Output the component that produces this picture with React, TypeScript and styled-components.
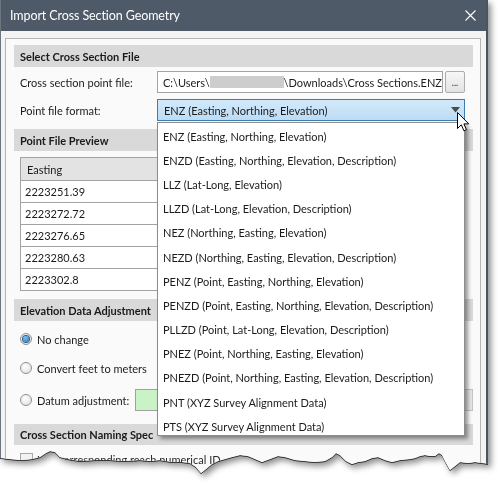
import React from "react";
import styled, { createGlobalStyle } from "styled-components";

const GlobalStyle = createGlobalStyle`
  html, body { margin: 0; padding: 0; background: #ffffff; }
  body { font-family: Lato, "Noto Sans", sans-serif; font-size: 11px; color: #1b1b1b; }
  * { box-sizing: border-box; }
`;

const JAG: [number, number][] = [
  [488, 464], [482, 463], [475, 462], [468, 463], [460, 462], [455, 466], [450, 470], [446, 463],
  [442, 455], [439, 453], [435, 456], [430, 456], [425, 455], [420, 456], [415, 458], [410, 459],
  [400, 460], [392, 462], [385, 460], [378, 457], [372, 458], [365, 461], [358, 462], [352, 464],
  [346, 461], [340, 455], [336, 453], [332, 457], [325, 461], [315, 462], [305, 461], [295, 460],
  [285, 457], [278, 456], [270, 459], [262, 462], [255, 459], [248, 456], [240, 455], [232, 457],
  [225, 459], [218, 461], [212, 464], [206, 469], [201, 473], [196, 467], [190, 463], [182, 462],
  [172, 462], [160, 460], [150, 461], [140, 460], [125, 461], [110, 460], [95, 460], [80, 461],
  [68, 459], [60, 457], [55, 452], [50, 451], [46, 453], [40, 457], [32, 459], [20, 460],
  [10, 459], [0, 458],
];
const CLIP = `polygon(0px 0px, 488px 0px, ${JAG.map(([x, y]) => `${x}px ${y}px`).join(", ")})`;

const Stage = styled.div`
  width: 500px;
  height: 484px;
  position: relative;
  overflow: hidden;
  background: #ffffff;
`;

const ShadowWrap = styled.div`
  width: 488px;
  filter: drop-shadow(0 1px 0 #3a3a3a) drop-shadow(3px 3px 3px rgba(0, 0, 0, 0.45));
`;

const Win = styled.div`
  width: 488px;
  height: 484px;
  background: #f3f3f3;
  border-left: 1px solid #6d7680;
  border-right: 2px solid #4a5562;
  clip-path: ${CLIP};
  display: flex;
  flex-direction: column;
`;

const TitleBar = styled.div`
  height: 31px;
  flex: none;
  background: #4f5a68;
  color: #ffffff;
  display: flex;
  align-items: center;
  justify-content: space-between;
  padding: 0 10px 0 9px;
  font-size: 12.5px;
  letter-spacing: -0.1px;
`;

const Body = styled.div`
  flex: 1;
  padding: 7px 5px 0 4px;
  display: flex;
`;

const Panel = styled.div`
  flex: 1;
  border: 1px solid #b5b5b5;
  border-bottom: none;
  background: #fafafa;
  padding: 6px 7px 0 8px;
  display: flex;
  flex-direction: column;
`;

const SectionHeader = styled.div<{ $mt: number; $h?: number }>`
  margin-top: ${(p) => p.$mt}px;
  height: ${(p) => p.$h ?? 22}px;
  flex: none;
  background: #d9d9d9;
  display: flex;
  align-items: center;
  padding-left: 6px;
  font-size: 11px;
  font-weight: 700;
  color: #1a1a1a;
  white-space: nowrap;
  overflow: hidden;
`;

const FieldRow = styled.div<{ $mt: number }>`
  margin-top: ${(p) => p.$mt}px;
  display: flex;
  align-items: center;
  padding-left: 6px;
  flex: none;
`;

const Label = styled.span`
  width: 137px;
  flex: none;
  white-space: nowrap;
`;

const TextBox = styled.div`
  width: 286px;
  height: 22px;
  border: 1px solid #a4a4a4;
  background: #ffffff;
  padding-left: 5px;
  display: flex;
  align-items: center;
  white-space: nowrap;
  overflow: hidden;
`;

const Redacted = styled.span`
  display: inline-block;
  width: 77px;
  height: 12px;
  background: #cdcdcd;
  filter: blur(0.6px);
`;

const BrowseButton = styled.div`
  margin-left: 2px;
  width: 20px;
  height: 22px;
  border: 1px solid #adadad;
  border-radius: 2px;
  background: linear-gradient(#f7f7f7, #e2e2e2);
  display: flex;
  align-items: flex-end;
  justify-content: center;
  padding-bottom: 5px;
  font-size: 9px;
  line-height: 1;
`;

const SelectWrap = styled.div`
  position: relative;
  width: 308px;
`;

const SelectBox = styled.div`
  height: 22px;
  border: 1px solid #3d7db0;
  background: linear-gradient(#d3e9fa, #bcdcf5);
  padding: 0 4px 0 6px;
  display: flex;
  align-items: center;
  justify-content: space-between;
`;

const DropList = styled.div`
  position: absolute;
  left: 0;
  top: 23px;
  width: 308px;
  height: 314px;
  z-index: 5;
  background: #ffffff;
  border: 1px solid #8c8c8c;
  box-shadow: 3px 3px 4px rgba(0, 0, 0, 0.4);
  padding-top: 1px;
`;

const DropItem = styled.div`
  height: 24.2px;
  padding-left: 5px;
  display: flex;
  align-items: center;
  white-space: nowrap;
`;

const CursorIcon = styled.svg`
  position: absolute;
  left: 300px;
  top: 13px;
  z-index: 6;
`;

const Table = styled.div`
  margin-top: 6px;
  margin-left: 6px;
  width: 420px;
  border: 1px solid #a3a3a3;
  background: #ffffff;
  flex: none;
`;

const TableRow = styled.div<{ $head?: boolean }>`
  display: grid;
  grid-template-columns: 137px 140px 1fr;
  height: 22px;
  background: ${(p) => (p.$head ? "#e3e3e3" : "#ffffff")};
  & + & {
    border-top: 1px solid #a3a3a3;
  }
`;

const Cell = styled.div<{ $head?: boolean }>`
  display: flex;
  align-items: center;
  padding-left: ${(p) => (p.$head ? 6 : 4)}px;
  border-right: 1px solid #a3a3a3;
`;

const RadioRow = styled.div<{ $mt: number }>`
  margin-top: ${(p) => p.$mt}px;
  height: 22px;
  display: flex;
  align-items: center;
  padding-left: 6px;
  flex: none;
`;

const Radio = styled.span<{ $on?: boolean }>`
  width: 12px;
  height: 12px;
  border-radius: 50%;
  border: 1px solid #8e8f8f;
  background: radial-gradient(circle at 40% 35%, #ffffff, #dcdcdc);
  margin-right: 5px;
  display: flex;
  align-items: center;
  justify-content: center;
  flex: none;
  &::after {
    content: "";
    display: ${(p) => (p.$on ? "block" : "none")};
    width: 6px;
    height: 6px;
    border-radius: 50%;
    background: radial-gradient(circle at 40% 35%, #7cc4f2, #1b67b0);
    box-shadow: 0 0 0 1px #2b5f91;
  }
`;

const RadioLabel = styled.span`
  flex: none;
  white-space: nowrap;
`;

const DatumLabel = styled.span`
  flex: 0 0 98px;
  min-width: 98px;
  white-space: nowrap;
`;

const GreenBox = styled.div`
  flex: 1;
  height: 22px;
  background: #c9f2c7;
  border: 1px solid #a0a0a0;
`;

const SmallButton = styled.div`
  flex: none;
  margin-left: 17px;
  width: 10px;
  height: 22px;
  border: 1px solid #c4c4c4;
  border-left: none;
  background: #e6e6e6;
`;

const CheckRow = styled.div`
  margin-top: 7px;
  height: 14px;
  display: flex;
  align-items: center;
  padding-left: 6px;
  flex: none;
  color: #2a2a2a;
  white-space: nowrap;
`;

const CheckBox = styled.span`
  width: 13px;
  height: 13px;
  border: 1px solid #a8a8a8;
  background: #f2f2f2;
  margin-right: 4px;
  flex: none;
`;

const formats = [
  "ENZ (Easting, Northing, Elevation)",
  "ENZD (Easting, Northing, Elevation, Description)",
  "LLZ (Lat-Long, Elevation)",
  "LLZD (Lat-Long, Elevation, Description)",
  "NEZ (Northing, Easting, Elevation)",
  "NEZD (Northing, Easting, Elevation, Description)",
  "PENZ (Point, Easting, Northing, Elevation)",
  "PENZD (Point, Easting, Northing, Elevation, Description)",
  "PLLZD (Point, Lat-Long, Elevation, Description)",
  "PNEZ (Point, Northing, Easting, Elevation)",
  "PNEZD (Point, Northing, Easting, Elevation, Description)",
  "PNT (XYZ Survey Alignment Data)",
  "PTS (XYZ Survey Alignment Data)",
];

const eastings = ["2223251.39", "2223272.72", "2223276.65", "2223280.63", "2223302.8"];

export default function App() {
  return (
    <Stage>
      <GlobalStyle />
      <ShadowWrap>
        <Win>
          <TitleBar>
            <span>Import Cross Section Geometry</span>
            <svg width="11" height="11" viewBox="0 0 11 11">
              <path d="M0.5 0.5 L10.5 10.5 M10.5 0.5 L0.5 10.5" stroke="#ffffff" strokeWidth="1.1" fill="none" />
            </svg>
          </TitleBar>
          <Body>
            <Panel>
              <SectionHeader $mt={0} $h={22}>Select Cross Section File</SectionHeader>
              <FieldRow $mt={4}>
                <Label>Cross section point file:</Label>
                <TextBox>
                  C:\Users\<Redacted />\Downloads\Cross Sections.ENZ
                </TextBox>
                <BrowseButton>...</BrowseButton>
              </FieldRow>
              <FieldRow $mt={6}>
                <Label>Point file format:</Label>
                <SelectWrap>
                  <SelectBox>
                    <span>{formats[0]}</span>
                    <svg width="9" height="6" viewBox="0 0 9 6">
                      <path d="M0 0 L9 0 L4.5 5.5 Z" fill="#4a4a4a" />
                    </svg>
                  </SelectBox>
                  <DropList>
                    {formats.map((f) => (
                      <DropItem key={f}>{f}</DropItem>
                    ))}
                  </DropList>
                  <CursorIcon width="13" height="20" viewBox="0 0 13 20">
                    <path
                      d="M0.5 0.5 L0.5 16.5 L4.3 12.8 L6.9 18.8 L9.4 17.7 L6.9 11.9 L11.8 11.9 Z"
                      fill="#ffffff"
                      stroke="#000000"
                      strokeWidth="1"
                      strokeLinejoin="round"
                    />
                  </CursorIcon>
                </SelectWrap>
              </FieldRow>
              <SectionHeader $mt={8}>Point File Preview</SectionHeader>
              <Table>
                <TableRow $head>
                  <Cell $head>Easting</Cell>
                  <Cell $head />
                  <Cell $head />
                </TableRow>
                {eastings.map((e) => (
                  <TableRow key={e}>
                    <Cell>{e}</Cell>
                    <Cell />
                    <Cell />
                  </TableRow>
                ))}
              </Table>
              <SectionHeader $mt={8}>Elevation Data Adjustment</SectionHeader>
              <RadioRow $mt={7}>
                <Radio $on />
                <RadioLabel>No change</RadioLabel>
              </RadioRow>
              <RadioRow $mt={7}>
                <Radio />
                <RadioLabel>Convert feet to meters</RadioLabel>
              </RadioRow>
              <RadioRow $mt={10}>
                <Radio />
                <DatumLabel>Datum adjustment:</DatumLabel>
                <GreenBox />
                <SmallButton />
              </RadioRow>
              <SectionHeader $mt={13} $h={21}>Cross Section Naming Spec</SectionHeader>
              <CheckRow>
                <CheckBox />
                <span>Use corresponding reach numerical ID</span>
              </CheckRow>
            </Panel>
          </Body>
        </Win>
      </ShadowWrap>
    </Stage>
  );
}
